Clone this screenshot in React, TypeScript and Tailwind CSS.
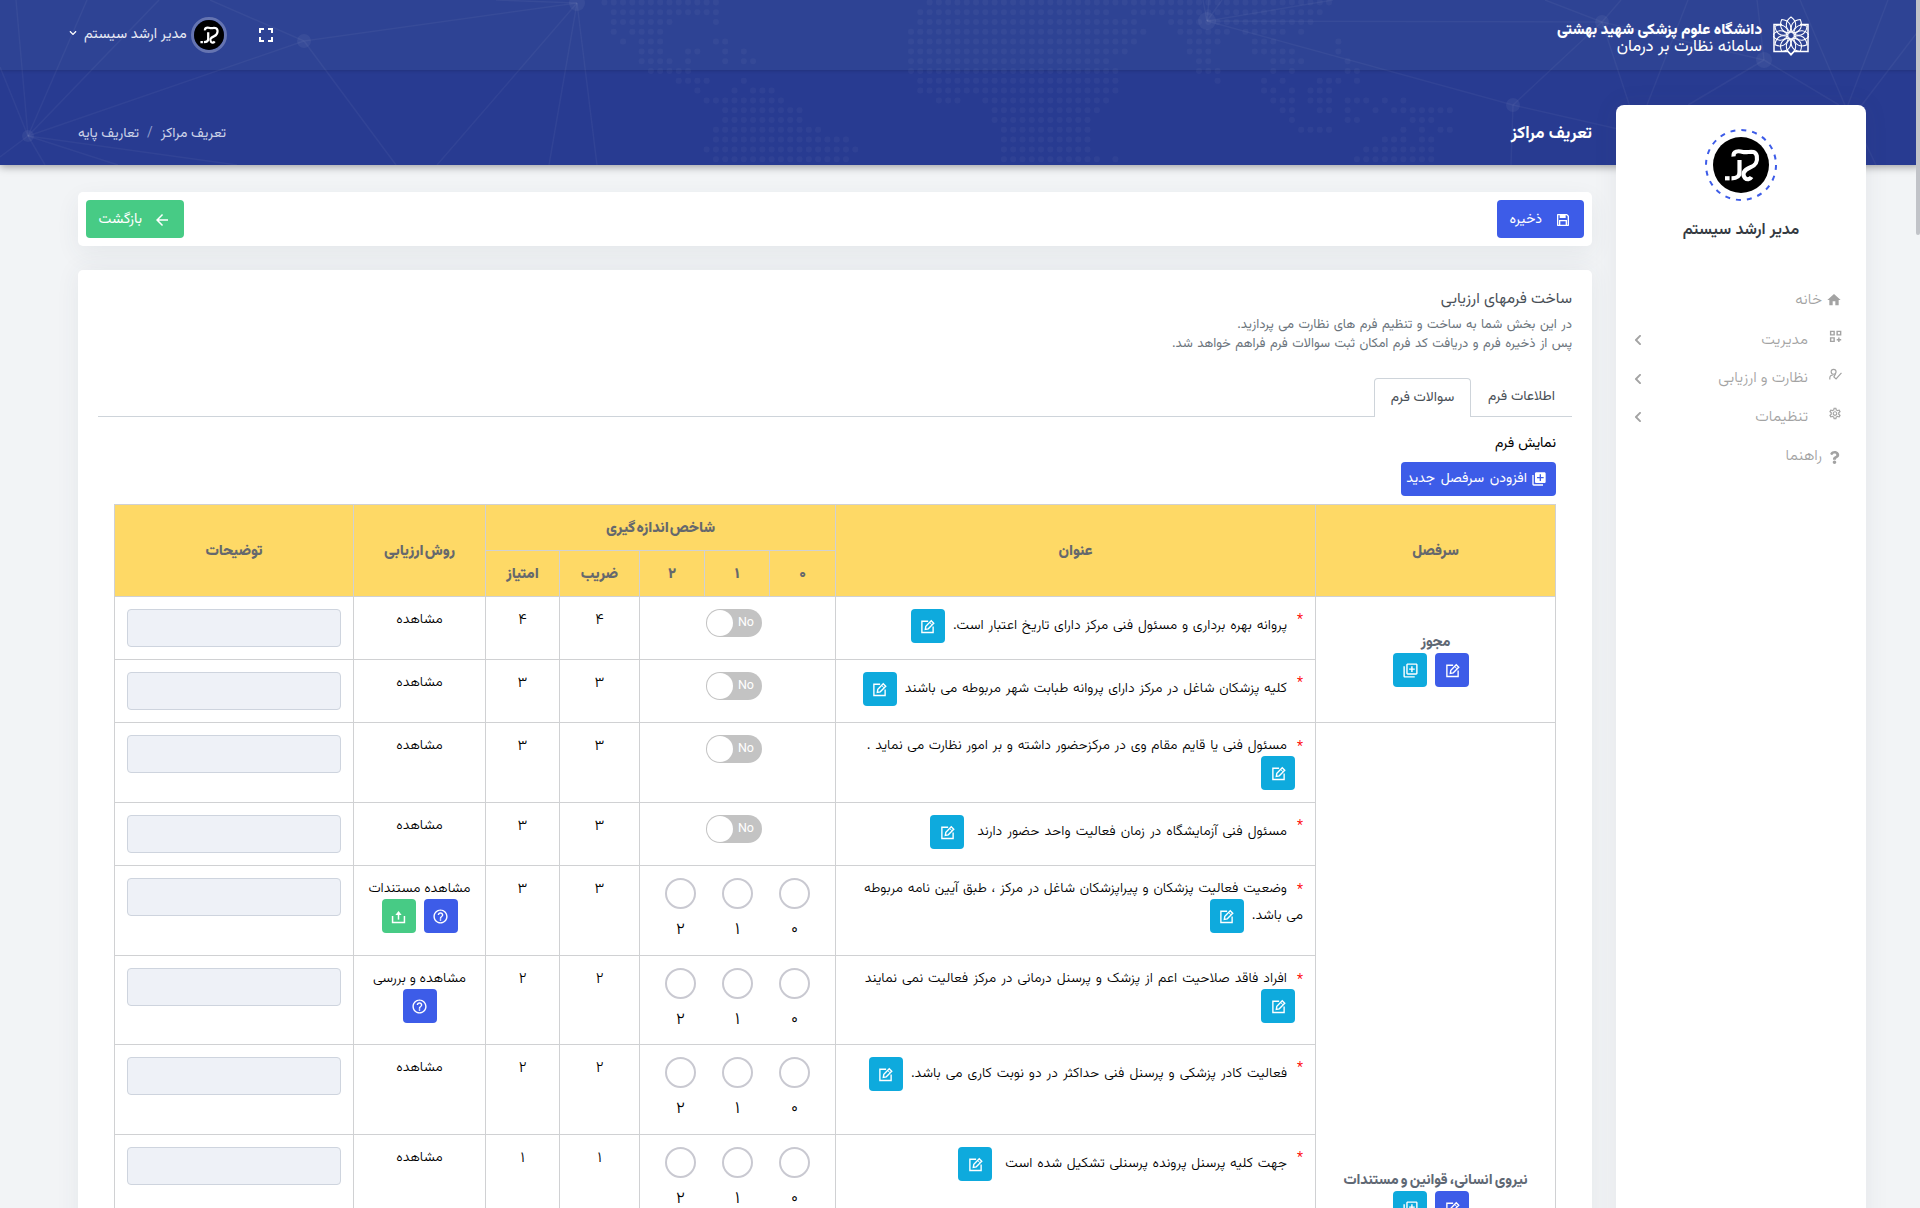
import type { ReactNode } from "react";
import { FaChevronDown, FaChevronLeft, FaQuestion } from "react-icons/fa";
import { MdArrowBack, MdFullscreen, MdHelpOutline, MdHome, MdLibraryAdd, MdOutlineLibraryAdd, MdOutlineSettings } from "react-icons/md";
import { RiSave3Line } from "react-icons/ri";

/* ---------- header artwork ---------- */

// Dot columns [first, last] for every line of the dotted world map.
const MAP: [number, number][][] = [
  [[-4, 8], [31, 74]],
  [[-3, 8], [30, 50], [53, 73]],
  [[-3, 3], [8, 8], [30, 53], [57, 72]],
  [[-3, -3], [-1, 2], [29, 54], [58, 63], [65, 69], [71, 71]],
  [[-2, -2], [0, 2], [8, 9], [29, 53], [59, 62], [66, 68], [75, 75]],
  [[0, 2], [5, 6], [9, 9], [11, 11], [29, 52], [59, 61], [66, 70], [75, 75]],
  [[0, 3], [5, 5], [9, 9], [11, 12], [29, 50], [60, 61], [68, 71], [76, 76]],
  [[1, 5], [29, 51], [60, 62], [68, 68], [70, 70], [76, 77]],
  [[4, 7], [11, 11], [30, 51], [62, 62], [67, 67], [69, 69], [73, 75], [77, 77]],
  [[6, 6], [10, 10], [12, 14], [30, 51], [67, 68], [70, 70], [72, 74]],
  [[7, 15], [32, 34], [37, 50], [68, 70], [72, 74], [76, 78], [80, 80], [82, 82]],
  [[9, 17], [38, 49], [69, 70], [73, 74], [76, 76], [79, 79], [81, 87]],
  [[9, 17], [38, 48], [70, 70], [76, 77], [83, 85]],
  [[8, 19], [39, 48], [71, 74], [82, 82], [84, 84], [86, 87]],
  [[8, 22], [39, 48], [80, 82], [84, 85]],
  [[7, 23], [39, 48], [78, 85]],
  [[8, 22], [39, 49], [51, 51], [77, 85]],
];

const LINES: [number, number, number, number][] = [
  [28, 136, 16, 0], [28, 136, 87, 0], [28, 136, 159, 0], [28, 136, 304, 41], [28, 136, 0, 67],
  [28, 136, 0, 157], [28, 136, 45, 165], [28, 136, 118, 165], [28, 136, 237, 165],
  [304, 41, 210, 0], [304, 41, 396, 165], [304, 41, 577, 3],
  [577, 3, 437, 165], [577, 3, 549, 165], [577, 3, 597, 165], [577, 3, 496, 0],
  [1207, 21, 1203, 0], [1207, 21, 1209, 0], [1207, 21, 1222, 0], [1207, 21, 1602, 22],
  [1207, 21, 1333, 0], [1207, 21, 1513, 105], [1602, 22, 1545, 0], [1602, 22, 1621, 0],
  [1602, 22, 1764, 60], [1602, 22, 1631, 110], [1513, 105, 1602, 22], [1513, 105, 1511, 165],
  [1513, 105, 1640, 134], [1764, 60, 1757, 0], [1764, 60, 1688, 105], [1764, 60, 1839, 105],
  [1688, 0, 1645, 110], [1800, 0, 1847, 110], [1888, 0, 1846, 110], [1919, 30, 1858, 110], [1864, 140, 1876, 165],
];

const HUBS: [number, number, number][] = [
  [28, 136, 6], [304, 41, 7], [577, 3, 8], [1207, 21, 9], [1602, 22, 7], [1513, 105, 7], [1764, 60, 8],
];

function HeaderArt() {
  return (
    <svg className="absolute inset-0" width="1920" height="165" fill="#fff" stroke="none">
      <g fillOpacity="0.035">
        {MAP.map((runs, row) =>
          runs.map(([from, to]) =>
            Array.from({ length: to - from + 1 }, (_, i) => (
              <rect key={`${row}-${from}-${i}`} x={638.6 + (from + i) * 9.29} y={row * 9.8 - 0.6} width="6" height="6" rx="2.4" />
            )),
          ),
        )}
      </g>
      <g stroke="#fff" strokeWidth="1.5" strokeOpacity="0.045">
        {LINES.map(([x1, y1, x2, y2], i) => (
          <line key={i} x1={x1} y1={y1} x2={x2} y2={y2} />
        ))}
      </g>
      <g fillOpacity="0.05">
        {HUBS.map(([cx, cy, r]) => (
          <circle key={cx} cx={cx} cy={cy} r={r} />
        ))}
      </g>
    </svg>
  );
}

function UniversityLogo() {
  const petals = Array.from({ length: 12 }, (_, i) => i * 30);
  return (
    <svg width="36" height="40" viewBox="0 0 36 40" fill="none" stroke="#fff">
      <path d="M9 8.5H1V35.5H15L18 38.8L21 35.5H35V8.5H27" strokeWidth="1.5" />
      {petals.map((a) => (
        <path key={a} d="M18 16.500C11 11.500 12.500 5 18 1C23.500 5 25 11.500 18 16.500Z" strokeWidth="1.050" transform={`rotate(${a} 18 19.500)`} />
      ))}
      <circle cx="18" cy="19.500" r="4.300" strokeWidth="0.8" />
    </svg>
  );
}

function Monogram({ size }: { size: number }) {
  return (
    <svg width={size} height={size} viewBox="0 0 56 56" fill="none" stroke="#fff" strokeWidth="4.200">
      <circle cx="28" cy="28" r="28" fill="#000" stroke="none" />
      <path d="M20.500 19.500C20 14 25 13.500 30 15C35 16.200 42 12 43.800 19C45 26 42 28.500 37 30.500C31 33 28.500 37 32 41C34 43 37 42.500 38.500 40" />
      <path d="M26.500 23V35C26.500 40 24 41.300 18.500 41.300" />
      <path d="M12 41.300H16.600" />
    </svg>
  );
}

/* ---------- icons ---------- */

function EditIcon() {
  return (
    <svg width="15" height="15" viewBox="0 0 24 24" fill="none" stroke="currentColor" strokeWidth="2.200">
      <path d="M13 3.500H3V21.500H21V12" />
      <path d="M8.500 16.500L9.300 11.800L18 2.800L22 6.800L13.200 15.700Z" />
      <path d="M15.500 5.500L19.300 9.300" strokeWidth="1.600" />
    </svg>
  );
}

function UploadIcon() {
  return (
    <svg width="15" height="15" viewBox="0 0 24 24" fill="none" stroke="currentColor" strokeWidth="2.400">
      <path d="M2.500 11V21.500H21.500V11" />
      <path d="M12 17V8" />
      <path d="M7 9.500L12 3L17 9.500Z" fill="currentColor" stroke="none" />
    </svg>
  );
}

function InspectIcon() {
  return (
    <svg width="13" height="13" viewBox="0 0 24 24" fill="none" stroke="currentColor" strokeWidth="2.200">
      <circle cx="8.500" cy="7" r="4.500" />
      <path d="M1.500 21V18C1.500 14.500 5 12.500 8 13M12 10.500L9 16.500L13 20L23 9" />
    </svg>
  );
}

function ModulesIcon() {
  return (
    <svg width="13" height="13" viewBox="0 0 24 24" fill="none" stroke="currentColor" strokeWidth="2.600">
      <path d="M3 2.500H9.500V9H3ZM15 2.500H21.500V9H15ZM3 14.500H9.500V21H3ZM18.200 14V22M14.200 18H22.500" />
    </svg>
  );
}

/* ---------- small parts ---------- */

const TONES = { blue: "bg-[#3d5ce8]", cyan: "bg-[#0eaadd]", green: "bg-[#47cb85]" };

function IconButton({ tone, className = "", children }: { tone: keyof typeof TONES; className?: string; children: ReactNode }) {
  return (
    <button className={`flex h-[34px] w-[34px] shrink-0 items-center justify-center rounded-[4px] text-white ${TONES[tone]} ${className}`}>
      {children}
    </button>
  );
}

function Toggle() {
  return (
    <div className="flex justify-center pr-[7px]">
      <div className="flex h-7 w-14 items-center justify-between rounded-full bg-[#c3c3c3] pr-2 pl-px text-white" dir="ltr">
        <span className="h-[26px] w-[26px] rounded-full bg-white" />
        <span className="pb-px font-[Roboto] text-[12.500px] leading-none font-normal">No</span>
      </div>
    </div>
  );
}

function Radios() {
  return (
    <div className="flex justify-center gap-[26px]">
      {["۰", "۱", "۲"].map((n) => (
        <label key={n} className="flex flex-col items-center">
          <span className="h-[31px] w-[31px] rounded-full border-2 border-[#c9c9d1]" />
          <span className="mt-[9px] text-[17px] leading-6">{n}</span>
        </label>
      ))}
    </div>
  );
}

/* ---------- data ---------- */

type Row = {
  lines: string[];
  button: "inline" | "spaced" | "below";
  scored?: boolean;
  factor: string;
  method: string;
  help?: boolean;
  upload?: boolean;
  height: string;
  spacing?: string;
};

const ROWS: Row[] = [
  { lines: ["پروانه بهره برداری و مسئول فنی مرکز دارای تاریخ اعتبار است."], button: "inline", factor: "۴", method: "مشاهده", height: "h-[63px]" },
  { lines: ["کلیه پزشکان شاغل در مرکز دارای پروانه طبابت شهر مربوطه می باشند"], button: "inline", factor: "۳", method: "مشاهده", height: "h-[63px]" },
  { lines: ["مسئول فنی یا قایم مقام وی در مرکزحضور داشته و بر امور نظارت می نماید ."], button: "below", factor: "۳", method: "مشاهده", height: "h-[80px]" },
  { lines: ["مسئول فنی آزمایشگاه در زمان فعالیت واحد حضور دارند"], button: "spaced", factor: "۳", method: "مشاهده", height: "h-[63px]", spacing: "[word-spacing:1.35px]" },
  { lines: ["وضعیت فعالیت پزشکان و پیراپزشکان شاغل در مرکز ، طبق آیین نامه مربوطه", "می باشد."], button: "inline", scored: true, factor: "۳", method: "مشاهده مستندات", help: true, upload: true, height: "h-[90px]" },
  { lines: ["افراد فاقد صلاحیت اعم از پزشک و پرسنل درمانی در مرکز فعالیت نمی نمایند"], button: "below", scored: true, factor: "۲", method: "مشاهده و بررسی", help: true, height: "h-[89px]", spacing: "[word-spacing:1.25px]" },
  { lines: ["فعالیت کادر پزشکی و پرسنل فنی حداکثر در دو نوبت کاری می باشد."], button: "inline", scored: true, factor: "۲", method: "مشاهده", height: "h-[90px]", spacing: "[word-spacing:1.25px]" },
  { lines: ["جهت کلیه پرسنل پرونده پرسنلی تشکیل شده است"], button: "spaced", scored: true, factor: "۱", method: "مشاهده", height: "h-[90px]" },
];

function Question({ row }: { row: Row }) {
  const lines = row.button === "below" ? [...row.lines, ""] : row.lines;
  return (
    <div className={`text-sm ${row.spacing ?? "[word-spacing:1px]"}`}>
      {lines.map((line, i) => {
        const last = i === lines.length - 1;
        return (
          <div key={i} className={last ? "flex h-[34px] items-center" : "flex h-[21px] items-center pt-[2px]"}>
            {i === 0 && <span className={last ? "w-4 shrink-0 self-start leading-6 text-[#f00]" : "w-4 shrink-0 self-start leading-[22px] text-[#f00]"}>*</span>}
            {line && <span className="leading-[21px] whitespace-nowrap">{line}</span>}
            {last && (
              <IconButton tone="cyan" className={row.button === "spaced" ? "mr-[13px]" : "mr-2"}>
                <EditIcon />
              </IconButton>
            )}
          </div>
        );
      })}
    </div>
  );
}

function Section({ title, span }: { title: string; span: number }) {
  return (
    <td rowSpan={span} className="border border-[#d0d1d3] align-middle">
      <div className="text-center text-[14.500px] leading-[21px] font-extrabold text-[#5f6874] [word-spacing:-1.5px]">{title}</div>
      <div className="flex justify-center gap-2 pr-[9px]">
        <IconButton tone="blue">
          <EditIcon />
        </IconButton>
        <IconButton tone="cyan">
          <MdOutlineLibraryAdd size={17} />
        </IconButton>
      </div>
    </td>
  );
}

const TD = "border border-[#d0d1d3] p-0 pt-3 align-top";
const TH = "border border-[#d0d1d3] p-0 pt-[2px] align-middle font-black";

function QuestionTable() {
  return (
    <table className="w-[1442px] table-fixed border-collapse text-center text-sm font-[350] text-black">
      <colgroup>
        <col className="w-[240px]" />
        <col className="w-[480px]" />
        <col className="w-[66px]" />
        <col className="w-[65px]" />
        <col className="w-[65px]" />
        <col className="w-[80px]" />
        <col className="w-[74px]" />
        <col className="w-[132px]" />
        <col className="w-[239px]" />
      </colgroup>
      <thead className="bg-[#fed966] text-[14.800px] text-[#65686d] [word-spacing:-2.5px]">
        <tr className="h-[46px]">
          <th rowSpan={2} className={TH}>سرفصل</th>
          <th rowSpan={2} className={TH}>عنوان</th>
          <th colSpan={5} className={TH}>شاخص اندازه گیری</th>
          <th rowSpan={2} className={TH}>روش ارزیابی</th>
          <th rowSpan={2} className={TH}>توضیحات</th>
        </tr>
        <tr className="h-[46px]">
          {["۰", "۱", "۲", "ضریب", "امتیاز"].map((h) => (
            <th key={h} className={TH}>{h}</th>
          ))}
        </tr>
      </thead>
      <tbody>
        {ROWS.map((row, i) => (
          <tr key={i} className={row.height}>
            {i === 0 && <Section title="مجوز" span={2} />}
            {i === 2 && <Section title="نیروی انسانی، قوانین و مستندات" span={7} />}
            <td className={`${TD} pr-3 text-right`}>
              <Question row={row} />
            </td>
            <td colSpan={3} className={TD}>{row.scored ? <Radios /> : <Toggle />}</td>
            <td className={`${TD} text-[15px] leading-[23px]`}>{row.factor}</td>
            <td className={`${TD} text-[15px] leading-[23px]`}>{row.factor}</td>
            <td className={TD}>
              <div className="h-[21px] leading-[23px] whitespace-nowrap">{row.method}</div>
              <div className="flex justify-center gap-2">
                {row.help && (
                  <IconButton tone="blue">
                    <MdHelpOutline size={17} />
                  </IconButton>
                )}
                {row.upload && (
                  <IconButton tone="green">
                    <UploadIcon />
                  </IconButton>
                )}
              </div>
            </td>
            <td className={TD}>
              <input disabled className="mx-auto block h-[38px] w-[214px] rounded-[4px] border border-[#ced4de] bg-[#eef1f7]" />
            </td>
          </tr>
        ))}
        <tr className="h-[448px]">
          <td className={TD} />
          <td colSpan={3} className={TD} />
          <td className={TD} />
          <td className={TD} />
          <td className={TD} />
          <td className={TD} />
        </tr>
      </tbody>
    </table>
  );
}

/* ---------- page ---------- */

const MENU = [
  { label: "مدیریت", icon: <ModulesIcon /> },
  { label: "نظارت و ارزیابی", icon: <InspectIcon /> },
  { label: "تنظیمات", icon: <MdOutlineSettings size={15} /> },
];

function Sidebar() {
  return (
    <aside className="-mt-[60px] h-[1160px] w-[250px] shrink-0 rounded-t-lg bg-white pt-6 shadow-[0_0_24px_rgba(60,70,90,0.08)]">
      <div className="relative mx-auto flex h-[72px] w-[72px] items-center justify-center">
        <svg className="absolute inset-0" width="72" height="72" fill="none" stroke="#3d5ce8" strokeWidth="2">
          <circle cx="36" cy="36" r="35" strokeDasharray="5 6" />
        </svg>
        <Monogram size={56} />
      </div>
      <div className="mt-[17px] text-center text-[16.200px] leading-6 font-semibold text-[#343a42]">مدیر ارشد سیستم</div>
      <nav className="mt-[39px] text-[15.500px] font-light text-[#a3a3a3]">
        <div className="flex h-10 items-center pr-[24px]">
          <MdHome size={16} className="-mt-[2px]" />
          <span className="mr-[4px]">خانه</span>
        </div>
        {MENU.map((m) => (
          <div key={m.label} className="flex h-[38.500px] items-center pr-[24px] pl-[16px]">
            <span className="-mt-2 flex w-[14px] justify-center">{m.icon}</span>
            <span className="mr-[20px] flex-1">{m.label}</span>
            <FaChevronLeft size={12} />
          </div>
        ))}
        <div className="flex h-[41px] items-center pr-[25px]">
          <FaQuestion size={13} />
          <span className="mr-[6px]">راهنما</span>
        </div>
      </nav>
    </aside>
  );
}

export default function App() {
  return (
    <div dir="rtl" className="relative h-[1208px] w-[1920px] overflow-hidden bg-[#f2f4f6] font-[Vazirmatn,'Noto_Sans_Arabic','DejaVu_Sans_Condensed',sans-serif]">
      <header className="relative h-[165px] bg-[#283b91] shadow-[0_2px_8px_rgba(0,0,0,0.35)]">
        <div className="h-[70px] bg-[#2e4394] shadow-[0_1px_3px_rgba(0,0,0,0.15)]" />
        <HeaderArt />
        <div className="absolute inset-0 text-white">
          <div className="flex h-[70px] items-center justify-between pr-[111px] pl-[69px]">
            <div className="flex items-center gap-[11px] pt-[2px]">
              <UniversityLogo />
              <div className="pt-[5px] whitespace-nowrap">
                <div className="text-[15px] leading-[17px] font-black">دانشگاه علوم پزشکی شهید بهشتی</div>
                <div className="text-[16.700px] leading-[16px]">سامانه نظارت بر درمان</div>
              </div>
            </div>
            <div className="flex items-center">
              <MdFullscreen size={24} />
              <div className="mr-[27px] rounded-full border-[3px] border-[#6574b1]">
                <Monogram size={30} />
              </div>
              <span className="mr-1 text-[14.400px] leading-5 text-[#e6e9f4]">مدیر ارشد سیستم</span>
              <FaChevronDown className="-mt-1 mr-[7px]" size={8} />
            </div>
          </div>
          <div className="flex items-center justify-between pt-[52px] pr-[328px] pl-[78px]">
            <h1 className="text-[17px] leading-6 font-bold">تعریف مراکز</h1>
            <div className="flex gap-2 text-[13.900px] leading-6 text-[#cdd3e8]">
              <span>تعریف مراکز</span>
              <span className="text-[#8f9bcb]">/</span>
              <span>تعاریف پایه</span>
            </div>
          </div>
        </div>
      </header>

      <div className="relative flex gap-6 pr-[54px] pl-[78px]">
        <Sidebar />
        <main className="flex-1 pt-[27px]">
          <div className="flex h-[54px] items-center justify-between rounded-[5px] bg-white px-2 shadow-[0_8px_24px_rgba(60,70,90,0.07)]">
            <button className="flex h-[38px] w-[87px] items-center rounded-[4px] bg-[#3d5ce8] pt-px pr-[13px] text-sm text-white">
              <RiSave3Line size={16} />
              <span className="mr-[13px]">ذخیره</span>
            </button>
            <button className="flex h-[38px] w-[98px] items-center rounded-[4px] bg-[#47cb85] pt-px pr-[13px] text-[14.400px] text-white">
              <MdArrowBack size={18} />
              <span className="mr-[11px]">بازگشت</span>
            </button>
          </div>

          <section className="mt-6 h-[1000px] rounded-[5px] bg-white px-5 pt-[17px] shadow-[0_0_24px_rgba(60,70,90,0.07)]">
            <h2 className="text-[15.500px] leading-6 text-[#495057]">ساخت فرمهای ارزیابی</h2>
            <p className="mt-[5px] text-[13px] leading-[19px] text-[#6c757d] [word-spacing:1px]">
              در این بخش شما به ساخت و تنظیم فرم های نظارت می پردازید.
              <br />
              پس از ذخیره فرم و دریافت کد فرم امکان ثبت سوالات فرم فراهم خواهد شد.
            </p>
            <div className="mt-[24px] flex h-[39px] border-b border-[#ced4da] text-[14px] text-[#495057]">
              <div className="flex w-[101px] items-center justify-center pt-px">اطلاعات فرم</div>
              <div className="flex h-[39px] w-[97px] items-center justify-center rounded-t-[4px] border border-b-0 border-[#ced4da] bg-white">سوالات فرم</div>
            </div>
            <div className="px-4 pt-[17px]">
              <div className="text-[14.200px] leading-5 text-black">نمایش فرم</div>
              <button className="mt-2 flex h-[34px] w-[155px] items-center rounded-[4px] bg-[#3d5ce8] pr-[9px] text-sm whitespace-nowrap text-white">
                <MdLibraryAdd size={16} />
                <span className="mr-1 [word-spacing:2px]">افزودن سرفصل جدید</span>
              </button>
              <div className="mt-2">
                <QuestionTable />
              </div>
            </div>
          </section>
        </main>
      </div>

      <div className="absolute top-0 right-0 h-[235px] w-1 rounded-b bg-[#c1c3c8]" />
    </div>
  );
}
